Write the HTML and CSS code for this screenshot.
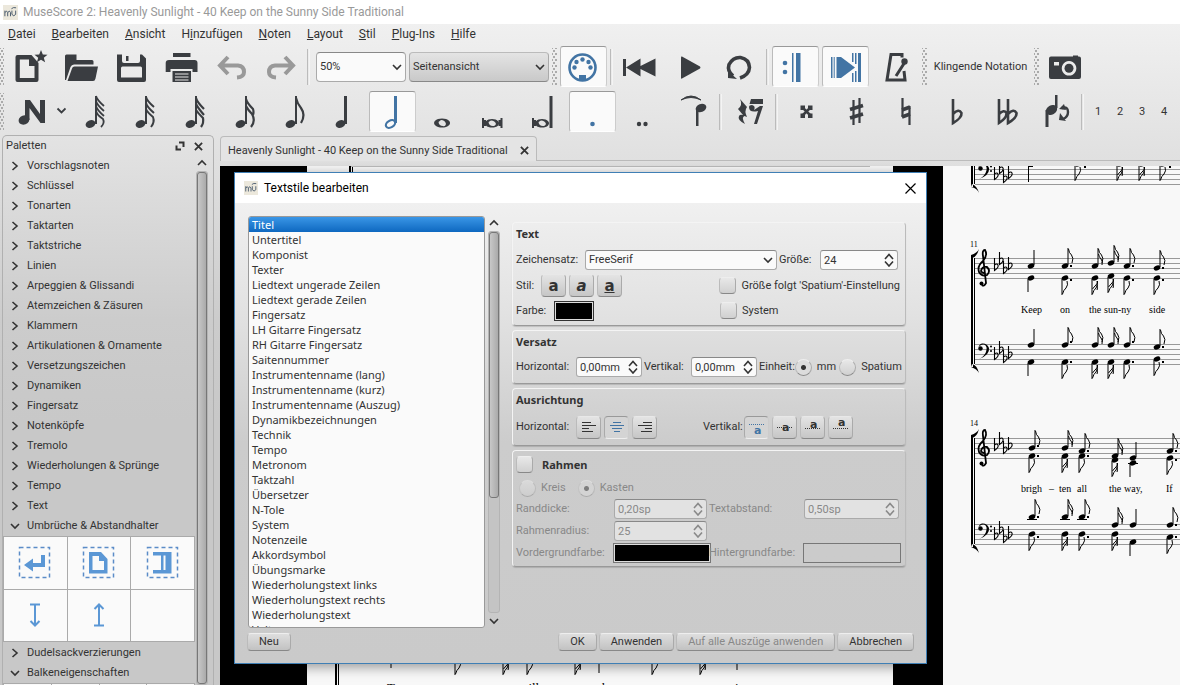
FILE: index.html
```html
<!DOCTYPE html>
<html lang="de">
<head>
    <meta charset="UTF-8">
    <meta name="viewport" content="width=device-width, initial-scale=1.0">
    <title>MuseScore 2: Heavenly Sunlight</title>
    <link rel="stylesheet" href="styles.css">
</head>
<body>
    <!-- shared symbols -->
    <svg class="defs" width="0" height="0" aria-hidden="true">
        <defs>
            <symbol id="logo" viewBox="0 0 16 16"><rect width="16" height="16" fill="#ece8dc"/><path d="M2 12V6M2 8q2-3 3 0v4M5 8q2-3 3 0v4M9.500 6v4q2 3 4 0V6M9 4q2-2 5-1" fill="none" stroke="#44566a"/></symbol>
            <symbol id="right" viewBox="0 0 10 10"><path d="M2.500 1L7 5 2.500 9" fill="none" stroke="#333" stroke-width="1.600"/></symbol>
            <symbol id="down" viewBox="0 0 10 10"><path d="M1 3L5 7 9 3" fill="none" stroke="#333" stroke-width="1.600"/></symbol>
            <symbol id="up" viewBox="0 0 10 10"><path d="M1 7L5 3 9 7" fill="none" stroke="#333" stroke-width="1.600"/></symbol>
            <symbol id="updown" viewBox="0 0 10 14"><path d="M1 6L5 1.500 9 6M1 8.500L5 13 9 8.500" fill="none" stroke="#333" stroke-width="1.600"/></symbol>
            <symbol id="cross" viewBox="0 0 10 10"><path d="M1 1L9 9M9 1L1 9" fill="none" stroke="#333" stroke-width="2"/></symbol>

            <!-- score glyphs, origin at the centre of the note head -->
            <g id="head"><ellipse rx="3.400" ry="2.400" transform="rotate(-20)"/></g>
            <g id="u0"><use href="#head"/><path class="thin" d="M3-1V-16"/></g>
            <g id="u1"><use href="#head"/><path class="thin" d="M3-1V-18M3.500-17Q4-13 6.500-11 9-8 7-3"/></g>
            <g id="u2"><use href="#u1"/><path class="thin" d="M3.500-12Q4-9 6-7 8-5 7-1"/></g>
            <g id="d0"><use href="#head"/><path class="thin" d="M-3 1V14"/></g>
            <g id="d1"><use href="#head"/><path class="thin" d="M-3 1V17M-2.500 16Q-1.500 12 1 10 3.500 7 2 3"/></g>
            <g id="d2"><use href="#d1"/><path class="thin" d="M-2.500 11Q-1 9 1 7 3 5 2.500 3M2 12Q3 10 2 7"/></g>
            <g id="dot"><rect x="5" y="-1" width="2" height="2"/></g>
            <g id="flat"><path d="M-1.500-8V4.500Q3 1.500 2-1 1-3-1.500-1" fill="none" stroke="#000" stroke-width="1.100"/></g>
            <g id="key"><use href="#flat" x="56" y="8"/><use href="#flat" x="61" y="2"/><use href="#flat" x="65" y="11"/><use href="#flat" x="70" y="7"/></g>
            <g id="treble"><path d="M42 26Q44 28 46 24L43-3Q42-9 45-9 48-4 43 2 37 7 39 13 42 18 47 16 51 12 47 8 42 7 41 12 42 14 44 14" fill="none" stroke="#000" stroke-width="1.800"/><circle cx="41.500" cy="24.500" r="2"/></g>
            <g id="bass"><circle cx="40.500" cy="4.500" r="2.200"/><path d="M38.500 4Q40 0 44 .5 48 2 46 8 44 13 39 15 50 11 49 4 47-1 42-.5 39 0 38.500 4z"/><circle cx="51" cy="2.500" r="1"/><circle cx="51" cy="7" r="1"/></g>
            <g id="staff"><path d="M35 .5H400M35 5.500H400M35 10.500H400M35 15.500H400M35 20.500H400" stroke="#999" fill="none"/></g>
            <g id="bracket"><path d="M34.500 0V106" stroke="#000" fill="none"/><path d="M31-3H33V109H31zM31-3Q37-5 39-9 37-1 32 0zM31 109Q37 111 39 115 37 107 32 106z"/></g>
        </defs>
    </svg>

    <header class="titlebar">
        <svg width="15" height="15"><use href="#logo"/></svg>
        <span>MuseScore 2: Heavenly Sunlight - 40 Keep on the Sunny Side Traditional</span>
    </header>

    <nav class="menubar">
        <a href="#"><u>D</u>atei</a>
        <a href="#"><u>B</u>earbeiten</a>
        <a href="#"><u>A</u>nsicht</a>
        <a href="#">H<u>i</u>nzufügen</a>
        <a href="#"><u>N</u>oten</a>
        <a href="#"><u>L</u>ayout</a>
        <a href="#"><u>S</u>til</a>
        <a href="#"><u>P</u>lug-Ins</a>
        <a href="#"><u>H</u>ilfe</a>
    </nav>

    <div class="toolbar">
        <span class="grip"></span>
        <button class="tool" aria-label="Neu"><svg viewBox="0 0 47 40"><path fill-rule="evenodd" d="M10.500 8H24.500L31.500 16V33Q31.500 35 29.500 35H10.500Q8.500 35 8.500 33V10Q8.500 8 10.500 8zM12.800 12.500V31H27.500V19H22V12.500z"/><path d="M34 3l1.800 4.500 4.700.2-3.700 3 1.300 4.600-4.100-2.600-4.100 2.600 1.300-4.600-3.700-3 4.700-.2z"/></svg></button>
        <button class="tool" aria-label="Öffnen"><svg viewBox="0 0 47 40"><path d="M8 9Q8 7.500 9.500 7.500H19.500V13H35Q36.500 13 36.500 14.500V17.500H17Q14.500 17.500 13.500 20L9 33H8z"/><path d="M17.500 19.500H41L38.500 31.500Q38 34 36 34H10.500L15 21.500Q15.500 19.500 17.500 19.500z"/></svg></button>
        <button class="tool" aria-label="Speichern"><svg viewBox="0 0 47 40"><path fill-rule="evenodd" d="M10 7.500H15V14Q15 16 17 16H31Q33 16 33 14V7.500H35L39 11.500V33Q39 35 37 35H12Q10 35 10 33zM14 21V30.500H35V21Q35 19.500 33.500 19.500H15.500Q14 19.500 14 21z"/><path d="M19 9h2.500v5H19z"/></svg></button>
        <button class="tool" aria-label="Drucken"><svg viewBox="0 0 47 40"><path d="M16 6H33.500V10H16zM12 13H37.500Q40.500 13 40.500 16V25H35.500V22H13.500V25H8.700V16Q8.700 13 12 13z"/><path d="M15.500 24H34V35H15.500z"/><path d="M18 27h13.500M18 30h13.500M18 33h13.500" stroke="#e8e8e8" stroke-width="1.200"/></svg></button>
        <button class="tool" aria-label="Rückgängig" disabled><svg viewBox="0 0 47 40"><path class="line" stroke-width="4" d="M21 10L13 18.500 21 27M13 18.500H31Q37 19 37 25 37 30 30 30.500"/></svg></button>
        <button class="tool" aria-label="Wiederherstellen" disabled><svg viewBox="0 0 47 40"><path class="line" stroke-width="4" d="M28 10L36 18.500 28 27M36 18.500H18Q12 19 12 25 12 30 19 30.500"/></svg></button>
        <span class="sep"></span>
        <span class="combo zoom"><select aria-label="Zoom"><option>50%</option></select><svg width="10" height="10"><use href="#down"/></svg></span>
        <span class="combo view"><select aria-label="Ansicht"><option>Seitenansicht</option></select><svg width="10" height="10"><use href="#down"/></svg></span>
        <span class="grip"></span>
        <button class="tool on" aria-label="MIDI-Eingabe"><svg viewBox="0 0 47 40"><circle cx="22.500" cy="20.500" r="13" fill="none" stroke="currentColor" stroke-width="2.600"/><circle cx="14.500" cy="20.500" r="2.200"/><circle cx="16.500" cy="15" r="2.200"/><circle cx="22.500" cy="12.500" r="2.200"/><circle cx="28.500" cy="15" r="2.200"/><circle cx="30.500" cy="20.500" r="2.200"/><path d="M19 28h7v6h-7z"/></svg></button>
        <span class="sep"></span>
        <button class="tool" aria-label="Zum Anfang"><svg viewBox="0 0 47 40"><path d="M7 12h3v17H7zM10 20.500L24.500 11.500V19L39.500 11.500V29.500L24.500 22V29.500z"/></svg></button>
        <button class="tool" aria-label="Wiedergabe"><svg viewBox="0 0 47 40"><path d="M16 9.500Q15 9 15 10.500V31Q15 32 16 31.500L34 21.500Q35 20.500 34 19.500z"/></svg></button>
        <button class="tool" aria-label="Schleife"><svg viewBox="0 0 47 40"><path class="line" stroke-width="3.600" d="M17 29Q11 24 13 17.500 17 10 24.500 10.500 33 12 33.500 20.500 33 28 24 31"/><path d="M12 31l0-7 9 8z"/></svg></button>
        <span class="sep"></span>
        <button class="tool on" aria-label="Wiederholungen spielen"><svg viewBox="0 0 47 40"><circle cx="13" cy="16" r="2.300"/><circle cx="13" cy="25" r="2.300"/><path d="M20 6h1.500v29H20zM24 6h4.500v29H24z"/></svg></button>
        <button class="tool on" aria-label="Partitur verfolgen"><svg viewBox="0 0 47 40"><path d="M9 10h1.500v21H9zM11.700 10h1v21h-1zM14.500 10H19L33 20.500 19 31H14.500zM30 6h1.500v9H30zM30 26h1.500v9H30zM33 6h1.500v11H33zM33 24h1.500v11H33zM36 6h3v29h-3z"/></svg></button>
        <button class="tool" aria-label="Metronom"><svg viewBox="0 0 47 40"><path class="line" stroke-width="3" d="M30 10.500V7.500H19L15 33H33L32 24M24 29L33 15"/><circle cx="32.500" cy="14.500" r="3.200"/></svg></button>
        <span class="grip"></span>
        <button class="text-tool">Klingende Notation</button>
        <span class="grip"></span>
        <button class="tool" aria-label="Bildausschnitt"><svg viewBox="0 0 47 40"><path fill-rule="evenodd" d="M9 9.500H31V8.500H36V9.500H37Q39 9.500 39 11.500V30Q39 32 37 32H9Q7 32 7 30V11.500Q7 9.500 9 9.500zM12 15v3.500h5V15zM27 14a7.300 7.300 0 1 0 .1 0z"/><circle cx="27" cy="21.300" r="4.500"/></svg></button>
    </div>

    <div class="toolbar">
        <span class="grip"></span>
        <button class="tool wide" aria-label="Noteneingabe"><svg viewBox="0 0 59 40"><ellipse cx="17" cy="28" rx="5.500" ry="4.500" transform="rotate(-20 17 28)"/><path d="M18 8H23L33 22V8H38V31H33.500L22.500 16V28H18z"/><path class="line" stroke-width="1.800" d="M50.500 16.500l4 4 4-4"/></svg></button>
        <button class="tool" aria-label="1/64"><svg viewBox="0 0 47 40"><ellipse cx="21.500" cy="32" rx="5" ry="3.800" transform="rotate(-20 21.500 32)"/><path d="M26 4h2v28h-2z"/><path class="line" stroke-width="1.800" d="M27 4Q28 8 35 14M27 9Q28 13 35 19M27 14Q28 18 35 24M27 19Q28 23 34 27 36 31 32 35"/></svg></button>
        <button class="tool" aria-label="1/32"><svg viewBox="0 0 47 40"><ellipse cx="21.500" cy="32" rx="5" ry="3.800" transform="rotate(-20 21.500 32)"/><path d="M26 4h2v28h-2z"/><path class="line" stroke-width="2" d="M27 5Q28 9 35 15M27 11Q28 15 35 21M27 17Q28 20 34 25 36 30 32 35"/></svg></button>
        <button class="tool" aria-label="1/32"><svg viewBox="0 0 47 40"><ellipse cx="21.500" cy="32" rx="5" ry="3.800" transform="rotate(-20 21.500 32)"/><path d="M26 4h2v28h-2z"/><path class="line" stroke-width="2.200" d="M27 6Q28 10 35 17M27 12Q29 16 35 23M27 18Q29 21 34 26 35 31 32 35"/></svg></button>
        <button class="tool" aria-label="1/16"><svg viewBox="0 0 47 40"><ellipse cx="21.500" cy="32" rx="5" ry="3.800" transform="rotate(-20 21.500 32)"/><path d="M26 4h2v28h-2z"/><path class="line" stroke-width="2.200" d="M27 7Q28 11 34 17 35 20 34 23M27 14Q29 18 33 22 37 29 32 35"/></svg></button>
        <button class="tool" aria-label="1/8"><svg viewBox="0 0 47 40"><ellipse cx="21.500" cy="32" rx="5" ry="3.800" transform="rotate(-20 21.500 32)"/><path d="M26 4h2v28h-2z"/><path class="line" stroke-width="2.200" d="M27 6Q28 11 32 16 37 23 32 31"/></svg></button>
        <button class="tool" aria-label="1/4"><svg viewBox="0 0 47 40"><ellipse cx="21.500" cy="32" rx="5" ry="3.800" transform="rotate(-20 21.500 32)"/><path d="M25 4h3v28h-3z"/></svg></button>
        <button class="tool on" aria-label="1/2"><svg viewBox="0 0 47 40"><ellipse cx="21.500" cy="32" rx="5" ry="3.300" fill="none" stroke="currentColor" stroke-width="2.200" transform="rotate(-30 21.500 32)"/><path d="M25 4h3v27h-3z"/></svg></button>
        <button class="tool" aria-label="1/1"><svg viewBox="0 0 47 40"><path fill-rule="evenodd" d="M23 26.500a8 4.500 0 1 0 .1 0zM22 28q4 0 5 4-1 3-3 2-4 0-4.500-4z"/></svg></button>
        <button class="tool" aria-label="Brevis"><svg viewBox="0 0 47 40"><path fill-rule="evenodd" d="M23 27a7 4.300 0 1 0 .1 0zM22 28.500q4 0 5 3.500-1 2.500-3 2-4 0-4.500-4z"/><path d="M13 26h2v10h-2zM15 28h2v6h-2zM29.500 28h2v6h-2zM31.500 26h2v10h-2z"/></svg></button>
        <button class="tool" aria-label="Longa"><svg viewBox="0 0 47 40"><path fill-rule="evenodd" d="M23 27a7 4.300 0 1 0 .1 0zM22 28.500q4 0 5 3.500-1 2.500-3 2-4 0-4.500-4z"/><path d="M13 26h2v10h-2zM15 28h2v6h-2zM30.500 4h3v32h-3z"/></svg></button>
        <button class="tool on" aria-label="Punktiert"><svg viewBox="0 0 47 40"><circle cx="23.500" cy="32" r="2.300"/></svg></button>
        <button class="tool" aria-label="Doppelt punktiert"><svg viewBox="0 0 47 40"><circle cx="20" cy="32" r="2.200"/><circle cx="26.500" cy="32" r="2.200"/></svg></button>
        <button class="tool" aria-label="Haltebogen"><svg viewBox="0 0 47 40"><path d="M12 8Q22 0 32 8 22 3 12 8z" stroke="currentColor"/><ellipse cx="32" cy="16" rx="5.500" ry="4" transform="rotate(-20 32 16)"/><path d="M27 16h2.500v18H27z"/></svg></button>
        <span class="sep"></span>
        <button class="tool" aria-label="Pause"><svg viewBox="0 0 47 40"><path d="M15 7L22 15Q19 19 22 25L19.500 24Q16 25 20 32 12 28 14 24 15 22 18 23L13 17Q18 13 15 7zM26 7h12v5H24.500zM24 15Q24 13 27 13 31 14 29 18L35 14H38L32 32H29L33 19Q24 21 24 15z"/></svg></button>
        <span class="sep"></span>
        <button class="tool" aria-label="Doppelkreuz"><svg viewBox="0 0 47 40"><path class="line" stroke-width="2.500" d="M21 15L30 24M30 15L21 24"/><path d="M19.500 13.500h4.500v4.500h-4.500zM27 13.500h4.500v4.500H27zM19.500 21.500h4.500V26h-4.500zM27 21.500h4.500V26H27z"/></svg></button>
        <button class="tool" aria-label="Kreuz"><svg viewBox="0 0 47 40"><path class="line" stroke-width="2.200" d="M22.500 8V33M28.500 6V31"/><path class="line" stroke-width="3.500" d="M19 17.500L32 13.500M19 26L32 22"/></svg></button>
        <button class="tool" aria-label="Auflösungszeichen"><svg viewBox="0 0 47 40"><path class="line" stroke-width="2.200" d="M21.500 6V25M28.500 14V33"/><path class="line" stroke-width="3.500" d="M21 18L29 15M21 25L29 22"/></svg></button>
        <button class="tool" aria-label="B"><svg viewBox="0 0 47 40"><path class="line" stroke-width="2.600" d="M22 7V31Q31 26 30.500 21 28 16 22 22"/></svg></button>
        <button class="tool" aria-label="Doppel-B"><svg viewBox="0 0 47 40"><path class="line" stroke-width="2.600" d="M18 7V31Q26 26 25.500 21 23 17 18 22M27 7V31Q36 26 35.500 21 33 16 27 22"/></svg></button>
        <button class="tool" aria-label="Halsrichtung"><svg viewBox="0 0 47 40"><ellipse cx="20.500" cy="18" rx="6" ry="4.500" transform="rotate(-30 20.500 18)"/><path d="M14.500 18h3v17h-3zM24 3h2.500v13H24z"/><path class="line" stroke-width="2.400" d="M31 16Q37 14 37 20 37 25 32 27"/><path d="M28 17l5-5 2 6zM28 28l1-7 6 8z"/></svg></button>
        <span class="sep"></span>
        <span class="voices"><button>1</button><button>2</button><button>3</button><button>4</button></span>
    </div>

    <main class="workspace">
        <aside class="palettes">
            <div class="palettes-head">
                <span>Paletten</span>
                <svg width="10" height="10"><path d="M4 1.500H8.500V6M6 8.500H1.500V4.500" fill="none" stroke="#333" stroke-width="2"/></svg>
                <svg width="9" height="9"><use href="#cross"/></svg>
            </div>
            <div class="palettes-body">
                <ul class="tree">
                    <li><svg><use href="#right"/></svg>Vorschlagsnoten</li>
                    <li><svg><use href="#right"/></svg>Schlüssel</li>
                    <li><svg><use href="#right"/></svg>Tonarten</li>
                    <li><svg><use href="#right"/></svg>Taktarten</li>
                    <li><svg><use href="#right"/></svg>Taktstriche</li>
                    <li><svg><use href="#right"/></svg>Linien</li>
                    <li><svg><use href="#right"/></svg>Arpeggien &amp; Glissandi</li>
                    <li><svg><use href="#right"/></svg>Atemzeichen &amp; Zäsuren</li>
                    <li><svg><use href="#right"/></svg>Klammern</li>
                    <li><svg><use href="#right"/></svg>Artikulationen &amp; Ornamente</li>
                    <li><svg><use href="#right"/></svg>Versetzungszeichen</li>
                    <li><svg><use href="#right"/></svg>Dynamiken</li>
                    <li><svg><use href="#right"/></svg>Fingersatz</li>
                    <li><svg><use href="#right"/></svg>Notenköpfe</li>
                    <li><svg><use href="#right"/></svg>Tremolo</li>
                    <li><svg><use href="#right"/></svg>Wiederholungen &amp; Sprünge</li>
                    <li><svg><use href="#right"/></svg>Tempo</li>
                    <li><svg><use href="#right"/></svg>Text</li>
                    <li><svg><use href="#down"/></svg>Umbrüche &amp; Abstandhalter</li>
                    <li class="cells">
                        <button aria-label="Zeilenumbruch"><svg width="34" height="34"><rect class="dash" x="1.500" y="1.500" width="30" height="30"/><path d="M6 19l9-6.500v4.500h8V9h4v12H15v4.500z"/></svg></button>
                        <button aria-label="Seitenumbruch"><svg width="34" height="34"><rect class="dash" x="1.500" y="1.500" width="30" height="30"/><path fill-rule="evenodd" d="M7 6H19L25.500 13V27.500H7zM10.500 10V24H22V15H17V10z"/></svg></button>
                        <button aria-label="Abschnittsumbruch"><svg width="34" height="34"><rect class="dash" x="1.500" y="1.500" width="30" height="30"/><path fill-rule="evenodd" d="M7 6H25.500V27.500H7V24H15V9.500H7zM17.500 9.500V24H19.500V9.500z"/></svg></button>
                        <button aria-label="Abstandhalter nach unten"><svg width="34" height="34"><path class="arrow" d="M12 6.500h10M17 6.500V27M12.500 23l4.500 4.500 4.500-4.500"/></svg></button>
                        <button aria-label="Abstandhalter nach oben"><svg width="34" height="34"><path class="arrow" d="M12 27.500h10M17 27.500V7M12.500 11L17 6.500l4.500 4.500"/></svg></button>
                        <button aria-label="Leer"></button>
                    </li>
                    <li><svg><use href="#right"/></svg>Dudelsackverzierungen</li>
                    <li><svg><use href="#down"/></svg>Balkeneigenschaften</li>
                    <li class="cells four"><button aria-label="Auto"></button><button aria-label="Beginn"></button><button aria-label="Mitte"></button><button aria-label="Ende"></button></li>
                </ul>
                <div class="scrollbar"><svg width="10" height="10"><use href="#up"/></svg><span class="track"><i class="full"></i></span></div>
            </div>
        </aside>
        <div class="splitter"></div>

        <section class="document">
            <div class="tabs">
                <div class="tab">Heavenly Sunlight - 40 Keep on the Sunny Side Traditional <svg width="9" height="9"><use href="#cross"/></svg></div>
            </div>
            <div class="canvas">
                <svg class="score" width="100%" height="100%">
                    <rect x="87" y="0" width="586" height="100%" fill="#f8f8f8"/>
                    <rect x="723" y="0" width="100%" height="100%" fill="#f8f8f8"/>

                    <!-- first page, what shows round the dialog -->
                    <path d="M129 0h2v8h-2zM132 0h1v8h-1zM115 496h2v40h-2zM118 496h1v40h-1zM338 0h4v1h-4zM381 0h1v1h-1zM472 0h1v1h-1zM515 0h1v1h-1z"/>
                    <path d="M131 .5H650" stroke="#bbb"/>
                    <use href="#d0" x="174" y="488"/><use href="#d1" x="238" y="492"/><use href="#d2" x="286" y="492"/><use href="#d1" x="310" y="492"/><use href="#d2" x="358" y="492"/><use href="#d0" x="382" y="493"/><use href="#d1" x="435" y="492"/><use href="#d2" x="483" y="492"/><use href="#d0" x="520" y="490"/>
                    <text class="lyric big" x="167" y="526">To</text><text class="lyric big" x="299" y="526">will</text><text class="lyric big" x="382" y="526">be</text><text class="lyric big" x="515" y="526">in</text>

                    <!-- second page, end of the first system -->
                    <g transform="translate(720 -6)">
                        <use href="#staff" y="4"/>
                        <use href="#bass" y="4"/><use href="#key" y="7"/>
                        <path d="M34.500 0V24M88.500 6V22" stroke="#000"/><path d="M31 0H33V27H31zM31 27Q37 28 39 33 37 26 32 24zM88 6h5v1h-5z"/>
                        <use href="#d1" x="138" y="4"/><use href="#d2" x="180" y="4"/><use href="#d2" x="202" y="4"/><use href="#d1" x="223" y="4"/>
                        <path d="M144 6h2v2h-2zM229 6h2v2h-2z"/>
                    </g>

                    <g transform="translate(720 -6)">
                        <text class="number" x="30" y="87">11</text>
                        <use href="#bracket" y="98"/><use href="#staff" y="98"/><use href="#staff" y="184"/>
                        <use href="#treble" y="99"/><use href="#bass" y="184"/><use href="#key" y="98"/><use href="#key" y="187"/>
                        <use href="#u0" x="91" y="106"/><use href="#u1" x="125" y="106"/><use href="#dot" x="125" y="106"/><use href="#u2" x="155" y="106"/><use href="#u2" x="171" y="103"/><use href="#u1" x="187" y="106"/><use href="#dot" x="187" y="106"/><use href="#u1" x="217" y="108"/><use href="#dot" x="217" y="108"/>
                        <use href="#d0" x="91" y="118"/><use href="#d1" x="125" y="118"/><use href="#dot" x="125" y="120"/><use href="#d2" x="155" y="118"/><use href="#d2" x="171" y="116"/><use href="#d1" x="187" y="118"/><use href="#dot" x="187" y="120"/><use href="#d1" x="217" y="118"/><use href="#dot" x="217" y="120"/>
                        <text class="lyric" x="81" y="153">Keep</text><text class="lyric" x="120" y="153">on</text><text class="lyric" x="149" y="153">the</text><text class="lyric" x="164" y="153">sun-ny</text><text class="lyric" x="209" y="153">side</text>
                        <use href="#u0" x="91" y="185"/><use href="#u1" x="125" y="185"/><use href="#dot" x="125" y="182"/><use href="#u2" x="155" y="185"/><use href="#u2" x="171" y="185"/><use href="#u1" x="187" y="185"/><use href="#dot" x="187" y="182"/><use href="#u1" x="217" y="187"/><use href="#dot" x="217" y="187"/>
                        <use href="#d0" x="91" y="202"/><use href="#d1" x="125" y="202"/><use href="#dot" x="125" y="202"/><use href="#d2" x="155" y="202"/><use href="#d2" x="171" y="202"/><use href="#d1" x="187" y="202"/><use href="#dot" x="187" y="202"/><use href="#d1" x="217" y="199"/><use href="#dot" x="217" y="202"/>
                    </g>

                    <g transform="translate(720 234)">
                        <text class="number" x="30" y="26">14</text>
                        <use href="#bracket" y="38"/><use href="#staff" y="38"/><use href="#staff" y="124"/>
                        <use href="#treble" y="39"/><use href="#bass" y="124"/><use href="#key" y="38"/><use href="#key" y="127"/>
                        <use href="#u1" x="92" y="48"/><use href="#dot" x="92" y="46"/><use href="#u2" x="125" y="48"/><use href="#u1" x="142" y="51"/><use href="#dot" x="142" y="51"/><use href="#u2" x="175" y="56"/><use href="#u0" x="193" y="58"/><use href="#u1" x="230" y="51"/><use href="#dot" x="230" y="51"/>
                        <use href="#d1" x="92" y="56"/><use href="#dot" x="92" y="56"/><use href="#d2" x="125" y="56"/><use href="#d1" x="142" y="56"/><use href="#dot" x="142" y="56"/><use href="#d2" x="175" y="60"/><use href="#d0" x="193" y="63"/><use href="#d1" x="230" y="58"/><use href="#dot" x="230" y="60"/>
                        <text class="lyric" x="81" y="92">brigh</text><text class="lyric" x="109" y="92">–</text><text class="lyric" x="119" y="92">ten</text><text class="lyric" x="137" y="92">all</text><text class="lyric" x="169" y="92">the</text><text class="lyric" x="184" y="92">way,</text><text class="lyric" x="226" y="92">If</text>
                        <path d="M87 119.500h10M120 119.500h10M137 119.500h10M188 63.500h10" stroke="#000"/>
                        <use href="#u1" x="92" y="117"/><use href="#dot" x="92" y="117"/><use href="#u2" x="125" y="117"/><use href="#u1" x="142" y="117"/><use href="#dot" x="142" y="117"/><use href="#u2" x="175" y="125"/><use href="#u0" x="193" y="125"/><use href="#u1" x="230" y="125"/><use href="#dot" x="230" y="125"/>
                        <use href="#d1" x="92" y="134"/><use href="#dot" x="92" y="137"/><use href="#d2" x="125" y="134"/><use href="#d1" x="142" y="134"/><use href="#dot" x="142" y="137"/><use href="#d2" x="175" y="134"/><use href="#d0" x="193" y="142"/><use href="#d1" x="230" y="137"/><use href="#dot" x="230" y="137"/>
                    </g>
                </svg>

                <div class="dialog" role="dialog" aria-label="Textstile bearbeiten">
                    <div class="dialog-title">
                        <svg width="14" height="14"><use href="#logo"/></svg>
                        <span>Textstile bearbeiten</span>
                        <button class="close" aria-label="Schließen"><svg width="11" height="11"><path d="M.5.500l10 10M10.500.500l-10 10" stroke="#000" stroke-width="1.200"/></svg></button>
                    </div>
                    <div class="dialog-body">
                        <div class="styles">
                            <ul class="style-list">
                                <li class="selected">Titel</li>
                                <li>Untertitel</li>
                                <li>Komponist</li>
                                <li>Texter</li>
                                <li>Liedtext ungerade Zeilen</li>
                                <li>Liedtext gerade Zeilen</li>
                                <li>Fingersatz</li>
                                <li>LH Gitarre Fingersatz</li>
                                <li>RH Gitarre Fingersatz</li>
                                <li>Saitennummer</li>
                                <li>Instrumentenname (lang)</li>
                                <li>Instrumentenname (kurz)</li>
                                <li>Instrumentenname (Auszug)</li>
                                <li>Dynamikbezeichnungen</li>
                                <li>Technik</li>
                                <li>Tempo</li>
                                <li>Metronom</li>
                                <li>Taktzahl</li>
                                <li>Übersetzer</li>
                                <li>N-Tole</li>
                                <li>System</li>
                                <li>Notenzeile</li>
                                <li>Akkordsymbol</li>
                                <li>Übungsmarke</li>
                                <li>Wiederholungstext links</li>
                                <li>Wiederholungstext rechts</li>
                                <li>Wiederholungstext</li>
                                <li>Volta</li>
                            </ul>
                            <div class="scrollbar"><svg width="10" height="10"><use href="#up"/></svg><span class="track"><i></i></span><svg width="10" height="10"><use href="#down"/></svg></div>
                        </div>

                        <form class="settings">
                            <fieldset class="group">
                                <h2>Text</h2>
                                <div class="row font-row">
                                    <label for="font">Zeichensatz:</label>
                                    <span class="combo"><select id="font"><option>FreeSerif</option></select><svg width="10" height="10"><use href="#down"/></svg></span>
                                    <label for="size">Größe:</label>
                                    <span class="spin"><input id="size" value="24"><svg width="10" height="14"><use href="#updown"/></svg></span>
                                </div>
                                <div class="row">
                                    <span class="w-style">Stil:</span>
                                    <span class="buttons letters"><button type="button"><b>a</b></button><button type="button"><b><i>a</i></b></button><button type="button"><b><u>a</u></b></button></span>
                                    <label class="check end"><input type="checkbox">Größe folgt 'Spatium'-Einstellung</label>
                                </div>
                                <div class="row">
                                    <span class="w-color">Farbe:</span>
                                    <button type="button" class="swatch" aria-label="Farbe"></button>
                                    <label class="check end system"><input type="checkbox">System</label>
                                </div>
                            </fieldset>

                            <fieldset class="group">
                                <h2>Versatz</h2>
                                <div class="row offset-row">
                                    <label for="ox">Horizontal:</label>
                                    <span class="spin"><input id="ox" value="0,00mm"><svg width="10" height="14"><use href="#updown"/></svg></span>
                                    <label for="oy">Vertikal:</label>
                                    <span class="spin"><input id="oy" value="0,00mm"><svg width="10" height="14"><use href="#updown"/></svg></span>
                                    <span>Einheit:</span>
                                    <label class="radio"><input type="radio" name="unit" checked>mm</label>
                                    <label class="radio"><input type="radio" name="unit">Spatium</label>
                                </div>
                            </fieldset>

                            <fieldset class="group">
                                <h2>Ausrichtung</h2>
                                <div class="row align-row">
                                    <span>Horizontal:</span>
                                    <span class="buttons">
                                        <button type="button" aria-label="Links"><svg width="16" height="12"><path d="M1 1.500h9M1 4.500h14M1 7.500h7M1 10.500h11"/></svg></button>
                                        <button type="button" class="on" aria-label="Zentriert"><svg width="16" height="12"><path d="M4 1.500h8M1 4.500h14M3 7.500h10M5 10.500h6"/></svg></button>
                                        <button type="button" aria-label="Rechts"><svg width="16" height="12"><path d="M6 1.500h9M1 4.500h14M8 7.500h7M4 10.500h11"/></svg></button>
                                    </span>
                                    <span>Vertikal:</span>
                                    <span class="buttons">
                                        <button type="button" class="on" aria-label="Oben"><svg width="20" height="20"><path class="guide" d="M2 7.500h16"/><text x="7" y="17">a</text></svg></button>
                                        <button type="button" aria-label="Mitte"><svg width="20" height="20"><path class="guide" d="M2 10.500h16"/><text x="7" y="14">a</text></svg></button>
                                        <button type="button" aria-label="Grundlinie"><svg width="20" height="20"><path class="guide" d="M2 11.500h16"/><text x="7" y="11">a</text></svg></button>
                                        <button type="button" aria-label="Unten"><svg width="20" height="20"><path class="guide" d="M2 11.500h16"/><text x="7" y="9">a</text></svg></button>
                                    </span>
                                </div>
                            </fieldset>

                            <fieldset class="group frame">
                                <h2><label class="check"><input type="checkbox">Rahmen</label></h2>
                                <div class="row shapes">
                                    <label class="radio"><input type="radio" name="shape" disabled>Kreis</label>
                                    <label class="radio"><input type="radio" name="shape" checked disabled>Kasten</label>
                                </div>
                                <div class="row frame-row">
                                    <label for="bw">Randdicke:</label>
                                    <span class="spin"><input id="bw" value="0,20sp" disabled><svg width="10" height="14"><use href="#updown"/></svg></span>
                                    <label for="pad">Textabstand:</label>
                                    <span class="spin"><input id="pad" value="0,50sp" disabled><svg width="10" height="14"><use href="#updown"/></svg></span>
                                </div>
                                <div class="row frame-row">
                                    <label for="rad">Rahmenradius:</label>
                                    <span class="spin"><input id="rad" value="25" disabled><svg width="10" height="14"><use href="#updown"/></svg></span>
                                </div>
                                <div class="row frame-row">
                                    <span>Vordergrundfarbe:</span>
                                    <button type="button" class="swatch" aria-label="Vordergrundfarbe" disabled></button>
                                    <span>Hintergrundfarbe:</span>
                                    <button type="button" class="swatch clear" aria-label="Hintergrundfarbe" disabled></button>
                                </div>
                            </fieldset>
                        </form>
                    </div>
                    <div class="dialog-foot">
                        <button class="push">Neu</button>
                        <span class="space"></span>
                        <button class="push">OK</button>
                        <button class="push">Anwenden</button>
                        <button class="push" disabled>Auf alle Auszüge anwenden</button>
                        <button class="push">Abbrechen</button>
                    </div>
                </div>
            </div>
        </section>
    </main>
</body>
</html>
```

FILE: styles.css
```css
* {
    box-sizing: border-box;
}

body {
    display: flex;
    flex-direction: column;
    height: 100vh;
    margin: 0;
    overflow: hidden;
    font: 11px/14px Roboto, sans-serif;
    color: #333;
    background: linear-gradient(#f0f0f0 24px, #e0e0e0 160px, #cccccc 320px, #c8c8c8 420px);
}

button, input, select {
    font: inherit;
    color: inherit;
    margin: 0;
    padding: 0;
}

ul {
    list-style: none;
    margin: 0;
    padding: 0;
}

svg {
    display: block;
    flex: none;
}

.defs {
    position: absolute;
}

/* window chrome */
.titlebar {
    display: flex;
    align-items: center;
    gap: 5px;
    height: 24px;
    padding-left: 3px;
    font-size: 12px;
    color: #999;
    background: #fff;
}

.menubar {
    display: flex;
    align-items: center;
    gap: 16px;
    height: 20px;
    padding-left: 8px;
    font-size: 12px;
}

.menubar a {
    color: inherit;
    text-decoration: none;
}

.toolbar {
    display: flex;
    align-items: center;
    gap: 3px;
    height: 45px;
}

.grip {
    flex: none;
    width: 5px;
    height: 38px;
    background:
        radial-gradient(circle, #aaa 0 1px, transparent 1px) 0 0 / 4px 6px,
        radial-gradient(circle, #aaa 0 1px, transparent 1px) 2px 3px / 4px 6px;
}

.grip:first-child {
    width: 4px;
}

.sep {
    flex: none;
    width: 3px;
    height: 36px;
    border-left: 1px solid #bbb;
    border-right: 1px solid #f4f4f4;
}

.tool {
    flex: none;
    width: 47px;
    height: 41px;
    border: 1px solid transparent;
    border-radius: 3px;
    background: none;
    color: #3a3d41;
}

.tool svg {
    width: 47px;
    height: 40px;
    margin: -1px;
    fill: currentColor;
}

.tool.wide, .tool.wide svg {
    width: 59px;
}

.tool .line, .tool:disabled .line {
    fill: none;
    stroke: currentColor;
}

.tool:disabled {
    color: #999;
}

.tool.on {
    color: #4274a4;
    background: #fafafa;
    border-color: #999 #ccc #fff #bbb;
}

.text-tool {
    flex: none;
    width: 101px;
    border: 0;
    background: none;
}

.voices {
    display: flex;
}

.voices button {
    width: 22px;
    border: 0;
    background: none;
}

/* combos and spin boxes */
.combo, .spin {
    position: relative;
    display: block;
}

.combo svg, .spin svg {
    position: absolute;
    right: 4px;
    top: 50%;
    transform: translateY(-50%);
    pointer-events: none;
}

.combo select, .spin input {
    display: block;
    width: 100%;
    height: 20px;
    padding: 0 3px;
    appearance: none;
    border: 1px solid #aaa;
    border-top-color: #888;
    border-radius: 3px;
    background: #fafafa;
    outline: 0;
}

.toolbar .combo select {
    height: 30px;
    border-radius: 4px;
}

.zoom {
    width: 90px;
    margin-left: 3px;
}

.view {
    width: 140px;
}

.toolbar .view select {
    background: linear-gradient(#e4e4e4, #c9c9c9);
    border-color: #bbb #aaa #888;
}

/* palettes */
.workspace {
    display: flex;
    flex: 1;
    min-height: 0;
}

.palettes {
    display: flex;
    flex-direction: column;
    width: 212px;
    margin: 1px 0 0 2px;
    border: 1px solid #b0b0b0;
    border-bottom: 0;
    border-radius: 5px 5px 0 0;
}

.palettes-head {
    display: flex;
    align-items: center;
    gap: 9px;
    height: 20px;
    padding: 0 10px 0 3px;
}

.palettes-head span {
    flex: 1;
}

.palettes-body {
    display: flex;
    flex: 1;
    min-height: 0;
}

.tree {
    flex: 1;
    overflow: hidden;
}

.tree li {
    display: flex;
    align-items: center;
    gap: 7px;
    height: 20px;
    padding-left: 7px;
}

.tree li > svg {
    width: 10px;
    height: 10px;
}

.tree .cells {
    display: grid;
    grid-template-columns: repeat(3, 1fr);
    align-items: stretch;
    gap: 1px;
    height: 106px;
    margin-bottom: 1px;
    padding: 1px;
    background: #aaa;
}

.tree .cells.four {
    grid-template-columns: repeat(4, 1fr);
    height: 50px;
}

.cells button {
    display: flex;
    align-items: center;
    justify-content: center;
    border: 0;
    background: #fafafa;
}

.cells svg {
    fill: #5b97d5;
}

.cells .dash {
    fill: none;
    stroke: #5b8cc8;
    stroke-width: 1.5;
    stroke-dasharray: 4 3;
}

.cells .arrow {
    fill: none;
    stroke: #5b97d5;
    stroke-width: 2;
}

.scrollbar {
    display: flex;
    flex-direction: column;
    align-items: center;
    gap: 3px;
    width: 14px;
    padding: 2px 0;
}

.track {
    flex: 1;
    width: 12px;
    border: 1px solid #b4b4b4;
    border-radius: 3px;
    background: #c4c4c4;
}

.track i {
    display: block;
    height: 70%;
    border: 1px solid #777;
    border-radius: 3px;
    background: linear-gradient(90deg, #c8c8c8, #aaa);
}

.track i.full {
    height: 100%;
}

.palettes .scrollbar {
    margin-right: 4px;
    padding-bottom: 0;
}

.splitter {
    width: 6px;
}

/* document */
.document {
    display: flex;
    flex: 1;
    flex-direction: column;
    min-width: 0;
    padding-top: 2px;
}

.tabs {
    height: 25px;
    border-bottom: 1px solid #bbb;
}

.tab {
    display: inline-flex;
    align-items: center;
    gap: 12px;
    height: 25px;
    padding: 3px 7px 0;
    border: 1px solid #bbb;
    border-bottom: 0;
    border-radius: 4px 4px 0 0;
    background: #e4e4e4;
}

.canvas {
    position: relative;
    flex: 1;
    min-height: 0;
    margin-top: 5px;
    background: #000;
}

.score {
    position: absolute;
    inset: 0;
}

.thin {
    fill: none;
    stroke: #000;
    stroke-width: 1;
}

.lyric, .number {
    font: 10px "Liberation Serif", serif;
}

.lyric.big {
    font-size: 13px;
}

.number {
    font-size: 8px;
}

/* dialog */
.dialog {
    position: absolute;
    left: 14px;
    top: 6px;
    width: 693px;
    border: 1px solid #3f7fb5;
    background: linear-gradient(#f0f0f0 30px, #e2e2e2 140px, #cccccc 270px, #cacaca);
    box-shadow: 0 3px 12px rgba(0, 0, 0, 0.4);
}

.dialog-title {
    display: flex;
    align-items: center;
    gap: 6px;
    height: 30px;
    padding: 0 10px 0 9px;
    font-size: 12px;
    color: #000;
    background: #fff;
}

.close {
    margin-left: auto;
    border: 0;
    background: none;
}

.dialog-body {
    display: flex;
    gap: 11px;
    padding: 13px 20px 0 13px;
}

.styles {
    display: flex;
    flex: none;
    gap: 2px;
    height: 412px;
}

.style-list {
    width: 237px;
    overflow: hidden;
    border: 1px solid #999;
    border-radius: 3px;
    background: #fafafa;
    font: 11px/15px "Noto Sans", sans-serif;
}

.style-list li {
    padding-left: 3px;
}

.style-list .selected {
    color: #fff;
    background: linear-gradient(#3a96e6, #0e68c0);
}

.settings {
    display: flex;
    flex: 1;
    flex-direction: column;
    gap: 4px;
    min-width: 0;
    padding-top: 6px;
}

.group {
    min-width: 0;
    margin: 0;
    padding: 0 5px 2px 3px;
    border: 1px solid #f4f4f4;
    border-bottom-color: #999;
    border-right-color: #bbb;
    border-radius: 4px;
    box-shadow: 0 1px 1px rgba(0, 0, 0, 0.15);
}

.group h2 {
    margin: 0;
    font: bold 11px/22px "Noto Sans", sans-serif;
}

.row {
    display: flex;
    align-items: center;
    height: 25px;
}

.row .end {
    margin-left: auto;
}

.font-row {
    display: grid;
    grid-template-columns: 69px 1fr 41px 80px;
    height: 26px;
    margin-top: 2px;
}

.font-row .combo {
    margin-right: 2px;
}

.font-row .spin {
    margin-right: 2px;
}

.w-style {
    width: 25px;
}

.w-color {
    width: 38px;
}

.system {
    width: 180px;
}

.offset-row {
    display: grid;
    grid-template-columns: 60px 66px 49px 66px 1fr auto auto;
    column-gap: 0;
    height: 28px;
}

.offset-row label:nth-of-type(2), .offset-row > span:nth-of-type(3) {
    padding-left: 2px;
}

.align-row {
    display: grid;
    grid-template-columns: 60px 127px 41px 1fr;
    height: 32px;
}

.buttons {
    display: flex;
    gap: 3px;
}

.buttons button {
    display: flex;
    align-items: center;
    justify-content: center;
    width: 25px;
    height: 23px;
    border: 1px solid #aaa;
    border-color: #e8e8e8 #aaa #888 #bbb;
    border-radius: 4px;
    background: linear-gradient(#e4e4e4, #c6c6c6);
}

.buttons button.on {
    color: #4274a4;
    border-color: #999 #ccc #eee #aaa;
    background: #d4d4d4;
}

.buttons svg {
    fill: none;
    stroke: currentColor;
    stroke-width: 1;
}

.buttons .guide {
    stroke-dasharray: 1 1;
}

.buttons text {
    font: bold 11px "DejaVu Sans", sans-serif;
    fill: currentColor;
    stroke: none;
}

.letters button {
    font: 15px "DejaVu Sans", sans-serif;
}

.swatch {
    width: 40px;
    height: 20px;
    border: 1px solid #333;
    outline: 1px solid #ddd;
    outline-offset: -2px;
    background: #000;
}

.check, .radio {
    display: flex;
    align-items: center;
    gap: 5px;
}

.check input, .radio input {
    width: 17px;
    height: 17px;
    appearance: none;
    border: 1px solid #aaa;
    border-color: #eee #aaa #888 #bbb;
    border-radius: 4px;
    background: linear-gradient(#e8e8e8, #d0d0d0);
}

.radio input {
    border-radius: 50%;
}

.radio input:checked {
    background: radial-gradient(circle, #333 0 2px, #dcdcdc 3px);
}

.radio + .radio {
    margin-left: 3px;
}

.frame h2 {
    line-height: 27px;
}

.frame .check {
    gap: 9px;
}

.frame .row {
    height: 22px;
    color: #888;
}

.frame .shapes {
    height: 20px;
    padding-left: 3px;
}

.shapes .radio + .radio {
    margin-left: 12px;
}

.frame-row {
    display: grid;
    grid-template-columns: 97px 96px 94px 98px;
}

.frame-row .spin {
    margin: 0 2px 0 1px;
}

.frame-row .swatch {
    width: 98px;
    border-color: #777;
}

.frame-row .swatch.clear {
    outline: 0;
    background: none;
}

.frame .spin input, .frame input:disabled {
    color: #888;
    background-color: #e2e2e2;
}

.frame .spin svg, .frame .radio input:disabled {
    opacity: 0.5;
}

.dialog-foot {
    display: flex;
    gap: 2px;
    padding: 5px 12px 12px;
}

.space {
    flex: 1;
}

.push {
    height: 18px;
    padding: 0 11px;
    border: 1px solid #aaa;
    border-color: #eee #aaa #888 #bbb;
    border-radius: 4px;
    background: linear-gradient(#dedede, #c2c2c2);
}

.push:disabled {
    color: #888;
}
```
